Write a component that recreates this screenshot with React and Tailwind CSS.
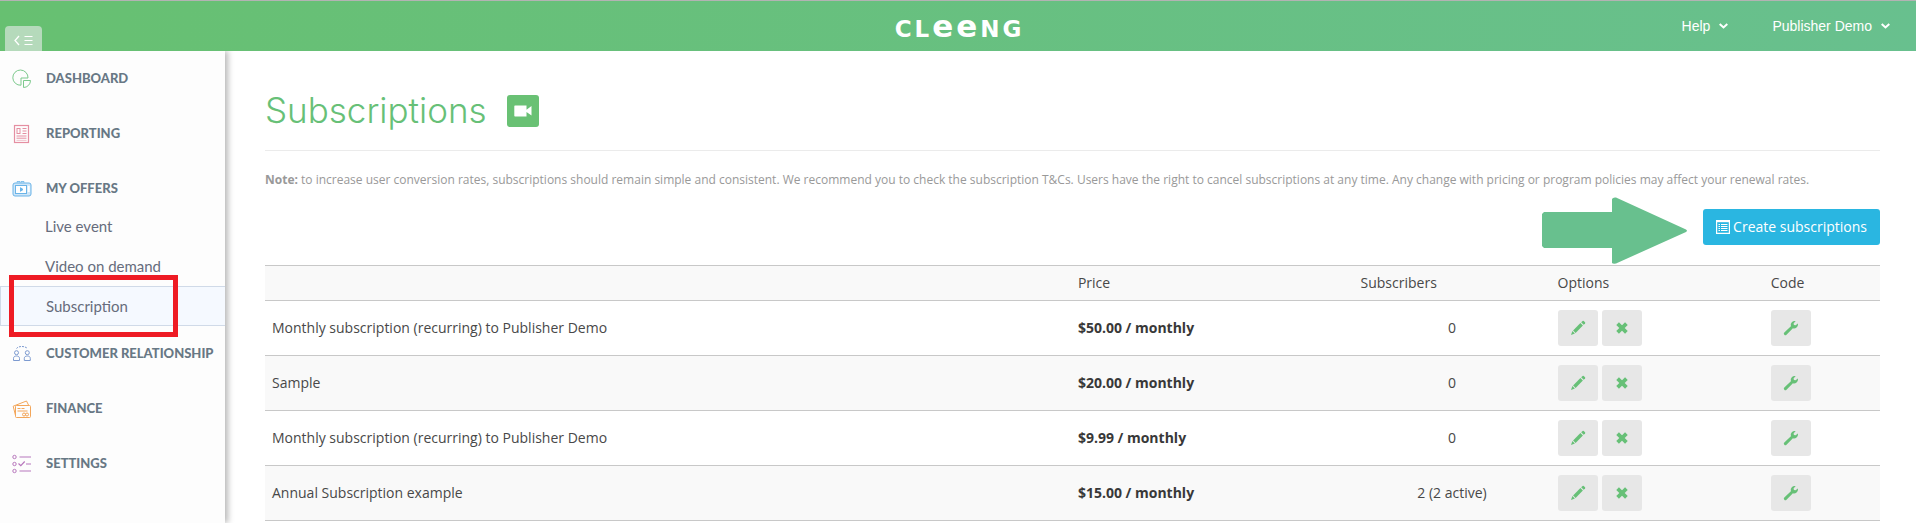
function Logo() {
  return (
    <a
      href="#home"
      aria-label="Cleeng"
      className="flex h-5 items-baseline gap-[3px] font-['DejaVu_Sans',sans-serif] text-[23px] leading-5 font-bold text-white"
    >
      <span>C</span>
      <span>L</span>
      <span className="text-[31px]">e</span>
      <span className="text-[31px]">e</span>
      <span>N</span>
      <span>G</span>
    </a>
  );
}

function Chevron() {
  return (
    <svg width="9" height="6" viewBox="0 0 9 6" fill="none" stroke="currentColor" strokeWidth="2" aria-hidden="true">
      <path d="M0.7 0.9 4.5 4.4 8.3 0.9" />
    </svg>
  );
}

function MenuToggleIcon() {
  return (
    <svg width="19" height="11" viewBox="0 0 19 11" fill="none" stroke="currentColor" aria-hidden="true">
      <path d="M5 1 1 5.5 5 10" strokeWidth="1.3" />
      <path d="M10.500 1.500H18.500M10.500 5.500H18.500M10.500 9.500H18.500" strokeWidth="1.200" />
    </svg>
  );
}

function DashboardIcon() {
  return (
    <svg width="20" height="20" viewBox="0 0 20 20" fill="none" stroke="#7cc98c" strokeWidth="1" aria-hidden="true">
      <path d="M9 16.200A7.600 7.600 0 1 1 16 9M9 16.200V9H16" />
      <path d="M11.500 11.500H18.500A7 7 0 0 1 11.500 18.500Z" />
    </svg>
  );
}

function ReportingIcon() {
  return (
    <svg width="20" height="20" viewBox="0 0 20 20" fill="none" stroke="#e58fa2" aria-hidden="true">
      <rect x="2.500" y="1.500" width="14" height="17" strokeWidth="1.200" />
      <rect x="5" y="4.500" width="3" height="5" />
      <path d="M10.500 4.500H14.500M10.500 7H14.500M10.500 9.500H14.500M4.500 12H14.500M4.500 14.200H14.500" />
      <path d="M4.500 16.400H14.500" strokeOpacity="0.5" />
    </svg>
  );
}

function OffersIcon() {
  return (
    <svg width="20" height="20" viewBox="0 0 20 20" fill="none" stroke="#6ab4e8" aria-hidden="true">
      <rect x="1" y="4" width="18" height="13" rx="2" fill="#cfe6f8" />
      <path d="M5 3.500V2.700H8V3.500M9 3.500V2.700H12V3.500" />
      <rect x="3.500" y="6.500" width="11" height="8" fill="#fff" />
      <path d="M8.500 8.700 11 10.500 8.500 12.300Z" fill="#6ab4e8" />
      <path d="M16.700 7V13" stroke="#fff" strokeWidth="2" />
    </svg>
  );
}

function CustomerIcon() {
  return (
    <svg width="20" height="20" viewBox="0 0 20 20" fill="none" stroke="#7c9ad0" aria-hidden="true">
      <path d="M4.500 4.500C6.500 1.800 13 1.800 15.500 4.500" strokeDasharray="2 1" />
      <circle cx="4.500" cy="8.700" r="2" />
      <path d="M1.500 16.500V14.500C1.500 12.500 3 12 4.500 12S7.500 12.500 7.500 14.500V16.500Z" />
      <circle cx="15.300" cy="8.700" r="2" />
      <path d="M12.300 16.500V14.500C12.300 12.500 13.800 12 15.300 12S18.300 12.500 18.300 14.500V16.500Z" />
    </svg>
  );
}

function FinanceIcon() {
  return (
    <svg width="20" height="20" viewBox="0 0 20 20" fill="none" stroke="#f3a65a" aria-hidden="true">
      <path d="M3.500 16.500 1.200 7.200 14.500 2 16.500 6" />
      <rect x="3.500" y="6.500" width="15" height="12" rx="1" />
      <path d="M5.500 9.500H8.500M9.500 9.500H12.500M5.500 12H15.500" />
      <circle cx="12" cy="15.500" r="1.500" />
      <circle cx="15" cy="15.500" r="1.500" />
    </svg>
  );
}

function SettingsIcon() {
  return (
    <svg width="20" height="20" viewBox="0 0 20 20" fill="none" stroke="#b878bd" aria-hidden="true">
      <circle cx="2.500" cy="3" r="1.700" />
      <circle cx="2.500" cy="10" r="1.700" />
      <circle cx="2.500" cy="17" r="1.700" />
      <path d="M7.500 3H19M7.500 17H19M6.500 9.500 8.800 11.700 12.700 7.500M14 10H19" strokeWidth="1.200" />
    </svg>
  );
}

function VideoIcon() {
  return (
    <svg width="18" height="12" viewBox="0 0 18 12" fill="#fff" aria-hidden="true">
      <path d="M1 0.500H12.500V4.800L17.500 1V10.500L12.500 7V11.500H1A0.700 0.700 0 0 1 0.300 10.800V1.200A0.700 0.700 0 0 1 1 0.500Z" />
    </svg>
  );
}

function ListIcon() {
  return (
    <svg width="14" height="14" viewBox="0 0 14 14" fill="none" stroke="#fff" aria-hidden="true">
      <path d="M0.600 0.600H13.400V13.400H0.600Z" strokeWidth="1.200" />
      <path d="M0.600 1.200H13.400" strokeWidth="2" />
      <path d="M2.500 4.500H4M5 4.500H11.500M2.500 6.500H4M5 6.500H11.500M2.500 8.500H4M5 8.500H11.500M2.500 10.500H4M5 10.500H11.500" />
    </svg>
  );
}

function PencilIcon() {
  return (
    <svg width="16" height="16" viewBox="0 0 16 16" fill="#67c077" aria-hidden="true">
      <path d="M11.200 2.300 12.600 0.900Q13.200 0.500 13.800 1L15 2.200Q15.500 2.800 15.100 3.400L13.700 4.800Z" />
      <path d="M10.400 3.100 12.900 5.600 5.600 12.900 3.100 10.400Z" />
      <path d="M2.400 11.100 4.900 13.600 1 15Z" />
    </svg>
  );
}

function RemoveIcon() {
  return (
    <svg width="12" height="12" viewBox="0 0 12 12" fill="none" stroke="#67c077" strokeWidth="3.800" aria-hidden="true">
      <path d="M1.600 1.600 10.400 10.400M10.400 1.600 1.600 10.400" />
    </svg>
  );
}

function WrenchIcon() {
  return (
    <svg width="16" height="16" viewBox="0 0 16 16" fill="#67c077" aria-hidden="true">
      <path d="M12.700 1.200A4 4 0 0 0 7.900 6.300L1.300 12.500A1.500 1.500 0 0 0 3.500 14.700L9.900 8.200A4 4 0 0 0 15 4L14.800 3.500 12.700 5.300 10.900 4.900 10.600 3.200Z" />
    </svg>
  );
}

const TOP_ITEMS = [
  { label: "DASHBOARD", Icon: DashboardIcon },
  { label: "REPORTING", Icon: ReportingIcon },
  { label: "MY OFFERS", Icon: OffersIcon },
];

const BOTTOM_ITEMS = [
  { label: "CUSTOMER RELATIONSHIP", Icon: CustomerIcon },
  { label: "FINANCE", Icon: FinanceIcon },
  { label: "SETTINGS", Icon: SettingsIcon },
];

const ROWS = [
  { name: "Monthly subscription (recurring) to Publisher Demo", price: "$50.00 / monthly", count: "0" },
  { name: "Sample", price: "$20.00 / monthly", count: "0" },
  { name: "Monthly subscription (recurring) to Publisher Demo", price: "$9.99 / monthly", count: "0" },
  { name: "Annual Subscription example", price: "$15.00 / monthly", count: "2 (2 active)" },
];

function NavItem({ label, Icon }) {
  return (
    <li>
      <a
        href="#section"
        className="flex h-[55px] items-center gap-[14px] pl-3 font-['Lato',sans-serif] text-[13px] font-black whitespace-nowrap text-[#687885]"
      >
        <Icon />
        {label}
      </a>
    </li>
  );
}

function SubItem({ label }) {
  return (
    <li>
      <a href="#offer" className="flex h-10 items-center pl-[45px]">
        {label}
      </a>
    </li>
  );
}

function Sidebar() {
  return (
    <nav
      aria-label="Main"
      className="relative z-10 w-[225px] shrink-0 bg-[#fdfdfd] shadow-[3px_0_6px_rgba(0,0,0,0.28)] [clip-path:inset(0_-12px_0_0)]"
    >
      <ul>
        {TOP_ITEMS.map((item) => (
          <NavItem key={item.label} {...item} />
        ))}
        <li className="-mt-[10px]">
          <ul className="font-['Lato',sans-serif] text-[15px] text-[#666c7c]">
            <SubItem label="Live event" />
            <SubItem label="Video on demand" />
            <li className="relative">
              <a
                href="#subscription"
                aria-current="page"
                className="flex h-10 items-center border-y border-l border-[#d0dae8] bg-[#f5f9ff] pl-[45px]"
              >
                Subscription
              </a>
              <span className="pointer-events-none absolute -top-[11px] left-[9px] h-[62px] w-[169px] border-5 border-[#ee1b24]" />
            </li>
          </ul>
        </li>
        {BOTTOM_ITEMS.map((item) => (
          <NavItem key={item.label} {...item} />
        ))}
      </ul>
    </nav>
  );
}

function ToolButton({ label, children }) {
  return (
    <button type="button" aria-label={label} className="flex h-9 w-10 items-center justify-center rounded-[3px] bg-[#e7e7e7]">
      {children}
    </button>
  );
}

function SubscriptionTable() {
  return (
    <table className="w-full table-fixed border-collapse text-left text-sm text-[#484848]">
      <colgroup>
        <col className="w-[49.9%]" />
        <col className="w-[17.5%]" />
        <col className="w-[12.2%]" />
        <col className="w-[13.2%]" />
        <col className="w-[7.2%]" />
      </colgroup>
      <thead>
        <tr className="h-[35px] border-y border-[#c8c8c8] bg-[#f9f9f9]">
          <td className="px-[7px]"></td>
          <th scope="col" className="px-[7px] font-normal">Price</th>
          <th scope="col" className="px-[7px] font-normal">Subscribers</th>
          <th scope="col" className="px-[7px] font-normal">Options</th>
          <th scope="col" className="px-[7px] font-normal">Code</th>
        </tr>
      </thead>
      <tbody>
        {ROWS.map((row, i) => (
          <tr key={i} className="h-[55px] border-b border-[#c8c8c8] even:bg-[#f9f9f9]">
            <td className="px-[7px]">{row.name}</td>
            <td className="px-[7px] font-bold text-[#383838]">{row.price}</td>
            <td className="px-[7px] text-center">{row.count}</td>
            <td className="px-[7px]">
              <div className="flex gap-1">
                <ToolButton label="Edit"><PencilIcon /></ToolButton>
                <ToolButton label="Delete"><RemoveIcon /></ToolButton>
              </div>
            </td>
            <td className="px-[7px]">
              <ToolButton label="Get code"><WrenchIcon /></ToolButton>
            </td>
          </tr>
        ))}
      </tbody>
    </table>
  );
}

export default function App() {
  return (
    <div className="flex min-h-screen flex-col bg-white font-['Open_Sans','Noto_Sans',sans-serif]">
      <header className="grid h-[51px] grid-cols-[1fr_auto_1fr] items-center border-t border-[#b3b3b3] bg-linear-to-r from-[#67c071] to-[#68c08e]">
        <button
          type="button"
          aria-label="Collapse menu"
          className="ml-[5px] flex h-[25px] w-[37px] items-center justify-center self-end rounded-t-[4px] bg-[#b5dabb] pt-1 text-white"
        >
          <MenuToggleIcon />
        </button>
        <Logo />
        <div className="flex justify-end gap-11 pr-[26px] font-['Liberation_Sans',Arial,sans-serif] text-sm text-white">
          <button type="button" className="flex items-center gap-[9px]">
            Help <Chevron />
          </button>
          <button type="button" className="flex items-center gap-[9px]">
            Publisher Demo <Chevron />
          </button>
        </div>
      </header>
      <div className="flex flex-1">
        <Sidebar />
        <main className="min-w-0 flex-1 pr-9 pl-10">
          <div className="flex h-[100px] items-center gap-5 border-b border-[#ebebeb] pt-5">
            <h1 className="font-['Inter',sans-serif] text-[35px] font-light text-[#67c077]">Subscriptions</h1>
            <button type="button" aria-label="Watch tutorial" className="flex size-8 items-center justify-center rounded-[3px] bg-[#69c174]">
              <VideoIcon />
            </button>
          </div>
          <p className="mt-5 text-xs leading-[18px] text-[#999]">
            <strong>Note:</strong> to increase user conversion rates, subscriptions should remain simple and consistent. We
            recommend you to check the subscription T&amp;Cs. Users have the right to cancel subscriptions at any time. Any
            change with pricing or program policies may affect your renewal rates.
          </p>
          <div className="relative mt-5 mb-5 flex justify-end">
            <svg
              className="absolute -top-3 right-[193px]"
              width="145"
              height="67"
              viewBox="0 0 145 67"
              fill="#68c08e"
              aria-hidden="true"
            >
              <path d="M2 15H70V2Q71 0 74 0.500L144 32.500Q146 33.800 144 35L74 66.500Q71 67 70 66V51H2L0 49V17Z" />
            </svg>
            <button type="button" className="flex h-9 items-center gap-[3px] rounded-[3px] bg-[#2ab6e1] px-[13px] text-sm text-white">
              <ListIcon />
              Create subscriptions
            </button>
          </div>
          <SubscriptionTable />
        </main>
      </div>
    </div>
  );
}
